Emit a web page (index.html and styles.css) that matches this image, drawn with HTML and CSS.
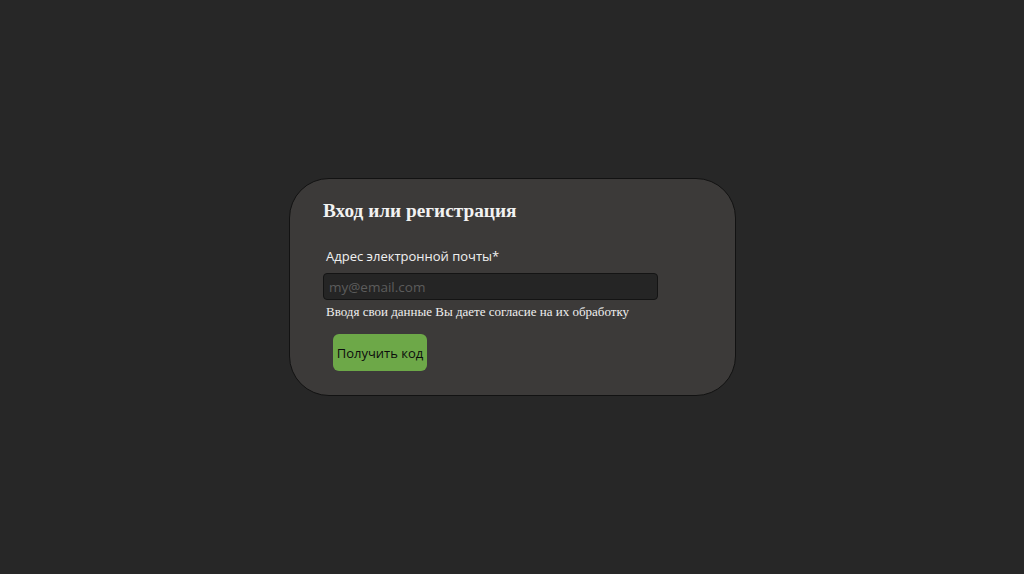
FILE: index.html
```html
<!DOCTYPE html>
<html lang="ru">
<head>
<meta charset="utf-8">
<link rel="stylesheet" href="styles.css">
</head>
<body>
<main class="page">
  <form class="card">
    <h1 class="title">Вход или регистрация</h1>
    <label class="label" for="email">Адрес электронной почты*</label>
    <input class="input" id="email" type="email" placeholder="my@email.com">
    <p class="note">Вводя свои данные Вы даете согласие на их обработку</p>
    <button class="btn" type="button">Получить код</button>
  </form>
</main>
</body>
</html>
```
FILE: styles.css
```css
html, body {
  margin: 0;
  padding: 0;
  background: #272727;
}
.page {
  width: 1024px;
  height: 574px;
  display: flex;
  justify-content: center;
  align-items: flex-start;
}
.card {
  margin-top: 178px;
  margin-left: 1px;
  width: 447px;
  height: 218px;
  box-sizing: border-box;
  background: #3c3a39;
  border: 1px solid #121212;
  border-radius: 40px;
  padding: 19px 0 0 33px;
  display: flex;
  flex-direction: column;
  align-items: flex-start;
}
.title {
  margin: 0;
  font-family: "Liberation Serif", serif;
  font-weight: bold;
  font-size: 19.3px;
  line-height: 25px;
  color: #f2f2f2;
}
.label {
  margin: 23px 0 0 3px;
  font-family: "Open Sans", sans-serif;
  font-size: 13px;
  line-height: 20px;
  color: #f0f0f0;
}
.input {
  margin: 7px 0 0 0;
  width: 335px;
  height: 27px;
  box-sizing: border-box;
  background: #252525;
  border: 1px solid #141414;
  border-radius: 4px;
  padding: 0 5px;
  font-family: "Open Sans", sans-serif;
  font-size: 13.5px;
  color: #ddd;
  outline: none;
}
.input::placeholder {
  color: #5c5c5c;
}
.note {
  margin: 3px 0 0 3px;
  font-family: "Liberation Serif", serif;
  font-size: 13px;
  line-height: 18px;
  color: #efefef;
}
.btn {
  margin: 13px 0 0 10px;
  width: 94px;
  height: 37px;
  background: #6da848;
  border: none;
  border-radius: 6px;
  font-family: "Open Sans", sans-serif;
  font-size: 13px;
  color: #0c0c0c;
  padding: 0;
}
```
